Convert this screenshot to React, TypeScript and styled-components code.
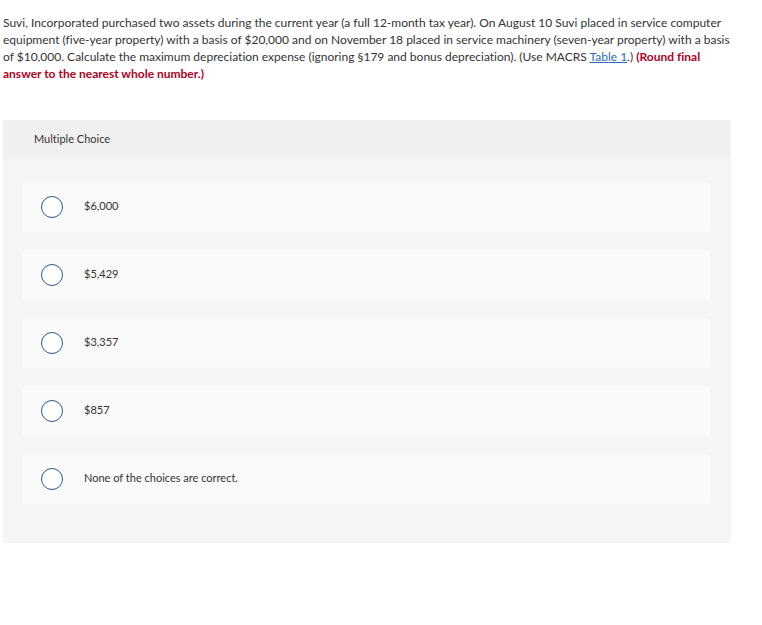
import styled, { createGlobalStyle } from "styled-components";

const GlobalStyle = createGlobalStyle`
  html, body {
    margin: 0;
    padding: 0;
    background: #ffffff;
  }
  body {
    font-family: Lato, "Open Sans", Arial, sans-serif;
    color: #333333;
    font-variant-ligatures: none;
  }
`;

const choices = ["$6,000", "$5,429", "$3,357", "$857", "None of the choices are correct."];

const App = () => {
  return (
    <>
      <GlobalStyle />
      <Page>
        <Question>
          Suvi, Incorporated purchased two assets during the current year (a full 12-month tax year). On August 10 Suvi
          placed in service computer equipment (five-year property) with a basis of $20,000 and on November 18 placed
          in service machinery (seven-year property) with a basis of $10,000. Calculate the maximum depreciation expense
          (ignoring §179 and bonus depreciation). (Use MACRS <TableLink href="#">Table 1</TableLink>.){" "}
          <Hint>(Round final answer to the nearest whole number.)</Hint>
        </Question>
        <Panel>
          <PanelHeader>Multiple Choice</PanelHeader>
          <ChoiceList>
            {choices.map((c) => (
              <ChoiceCard key={c}>
                <Radio />
                <ChoiceText>{c}</ChoiceText>
              </ChoiceCard>
            ))}
          </ChoiceList>
        </Panel>
      </Page>
    </>
  );
};

export default App;

const Page = styled.div`
  padding: 14px 0 0 3px;
  width: 728px;
`;

const Question = styled.p`
  margin: 0;
  font-size: 12px;
  line-height: 17px;
  color: #333333;
`;

const TableLink = styled.a`
  color: #2a6ebb;
  text-decoration: underline;
`;

const Hint = styled.strong`
  color: #b3001e;
  font-weight: 700;
`;

const Panel = styled.div`
  margin-top: 38px;
  background: #f5f5f5;
  border-radius: 2px;
  padding-bottom: 39px;
`;

const PanelHeader = styled.div`
  display: flex;
  align-items: center;
  height: 38px;
  padding: 0 0 2px 31px;
  box-sizing: border-box;
  background: #f0f0f0;
  font-size: 11px;
  color: #333333;
`;

const ChoiceList = styled.div`
  display: flex;
  flex-direction: column;
  gap: 18px;
  padding: 24px 21px 0 19px;
`;

const ChoiceCard = styled.div`
  display: flex;
  align-items: center;
  height: 50px;
  background: #fafafa;
  border-radius: 3px;
  padding-left: 19px;
`;

const Radio = styled.span`
  width: 20px;
  height: 20px;
  border: 1.5px solid #2b5a8a;
  border-radius: 50%;
  background: #ffffff;
  flex-shrink: 0;
`;

const ChoiceText = styled.span`
  margin-left: 21px;
  padding-bottom: 3px;
  font-size: 11px;
  color: #333333;
`;
